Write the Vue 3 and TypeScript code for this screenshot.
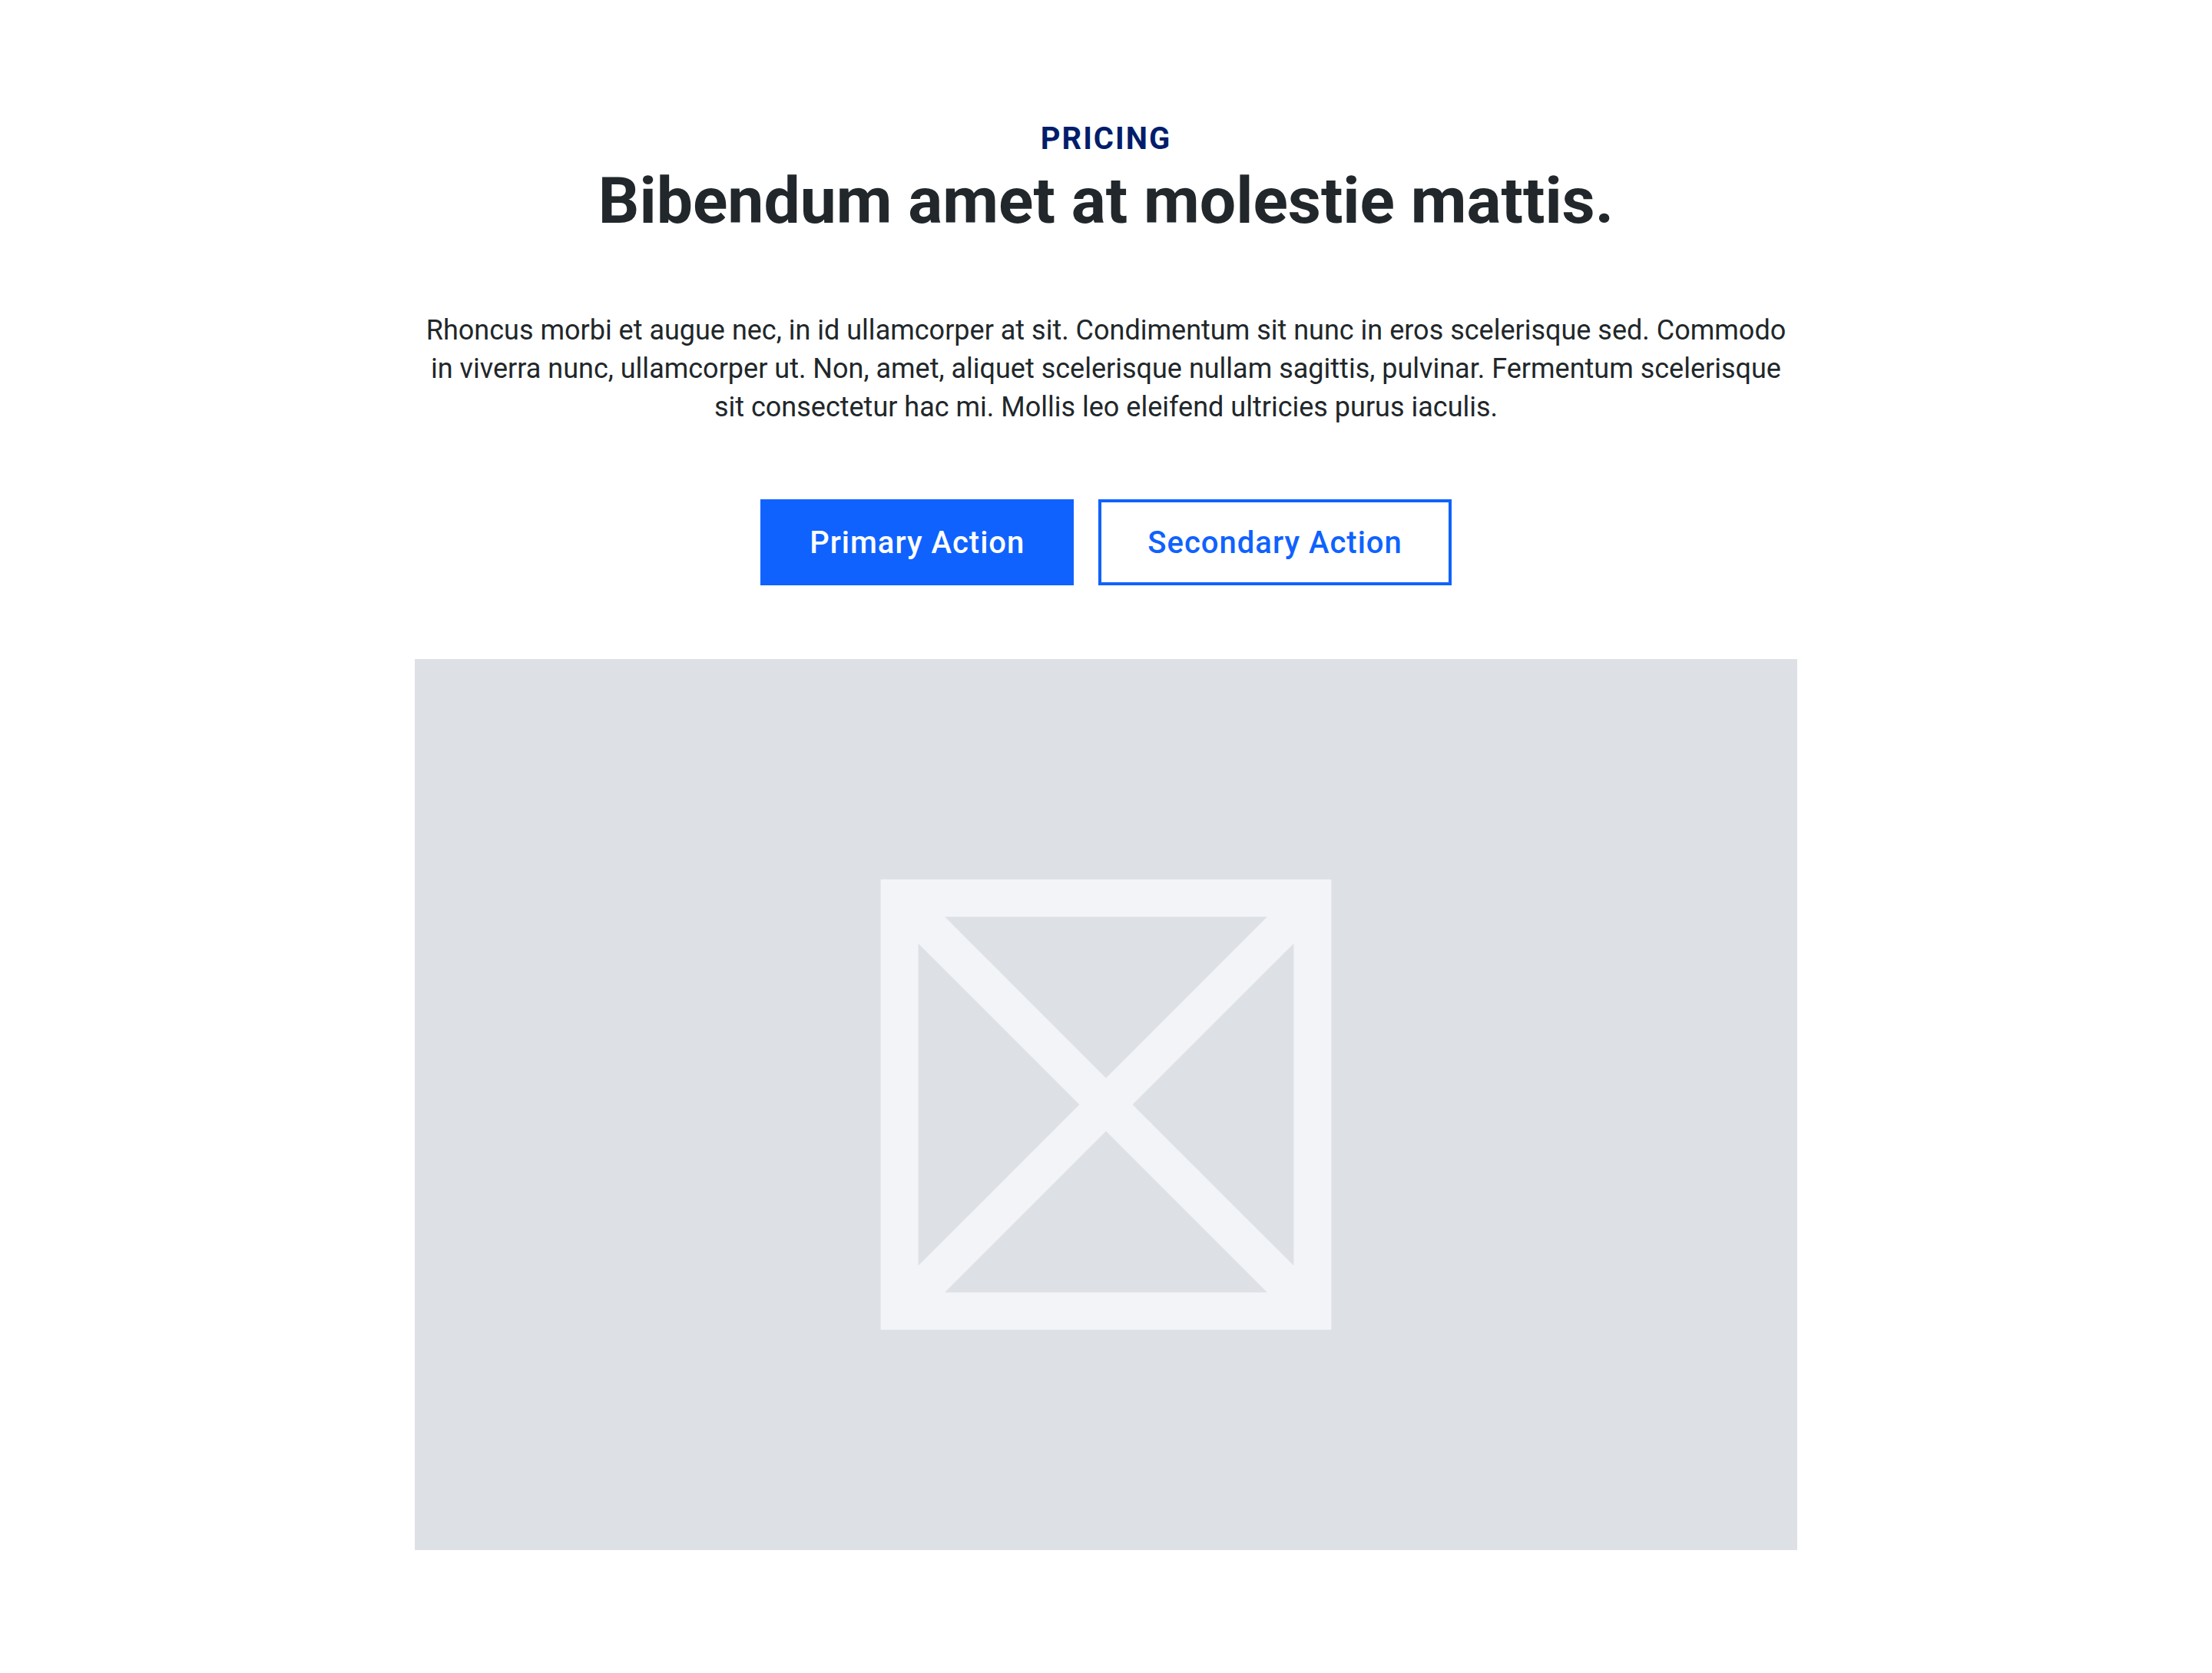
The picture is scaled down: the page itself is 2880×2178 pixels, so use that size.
<script setup lang="ts">
const eyebrow: string = 'PRICING'
const title: string = 'Bibendum amet at molestie mattis.'
const copy: string =
  'Rhoncus morbi et augue nec, in id ullamcorper at sit. Condimentum sit nunc in eros scelerisque sed. Commodo in viverra nunc, ullamcorper ut. Non, amet, aliquet scelerisque nullam sagittis, pulvinar. Fermentum scelerisque sit consectetur hac mi. Mollis leo eleifend ultricies purus iaculis.'
</script>

<template>
  <main class="hero">
    <header class="heading">
      <p class="eyebrow">{{ eyebrow }}</p>
      <h1 class="title">{{ title }}</h1>
    </header>
    <p class="copy">{{ copy }}</p>
    <div class="actions">
      <button type="button" class="action primary">Primary Action</button>
      <button type="button" class="action secondary">Secondary Action</button>
    </div>
    <div class="media">
      <svg class="placeholder" viewBox="0 0 588 588" role="img" aria-label="Image placeholder">
        <path
          fill="#f2f4f8"
          fill-rule="evenodd"
          d="M.67 .67H587.33V587.33H.67ZM84.13 49.56L294 259.43L503.87 49.56ZM49.56 84.13V503.87L259.43 294ZM538.44 84.13L328.57 294L538.44 503.87ZM294 328.57L84.13 538.44H503.87Z"
        />
      </svg>
    </div>
  </main>
</template>

<style>
body {
  margin: 0;
  background: #fff;
}
</style>

<style scoped>
.hero {
  box-sizing: border-box;
  max-width: 1800px;
  margin: 0 auto;
  padding: 160px 0;
  display: flex;
  flex-direction: column;
  align-items: center;
  font-family: Roboto, sans-serif;
  color: #21272a;
}
.heading {
  text-align: center;
}
.eyebrow {
  margin: 0;
  font-size: 40px;
  line-height: 42px;
  font-weight: 700;
  letter-spacing: 2px;
  color: #001d6c;
}
.title {
  margin: 14px 0 0;
  font-size: 84px;
  line-height: 92px;
  font-weight: 700;
}
.copy {
  margin: 97px 0 95px;
  font-size: 36px;
  line-height: 50px;
  text-align: center;
}
.actions {
  display: flex;
  gap: 32px;
  margin-bottom: 96px;
}
.action {
  box-sizing: border-box;
  height: 112px;
  padding: 2px 60px 0;
  border: 4px solid #0f62fe;
  border-radius: 0;
  font-family: inherit;
  font-size: 40px;
  line-height: 40px;
  font-weight: 500;
  letter-spacing: 1px;
}
.primary {
  background: #0f62fe;
  color: #fff;
}
.secondary {
  background: #fff;
  color: #0f62fe;
}
.media {
  width: 100%;
  aspect-ratio: 1800 / 1160;
  display: flex;
  align-items: center;
  justify-content: center;
  background: #dde1e6;
}
.placeholder {
  width: 588px;
  height: 588px;
}
</style>
